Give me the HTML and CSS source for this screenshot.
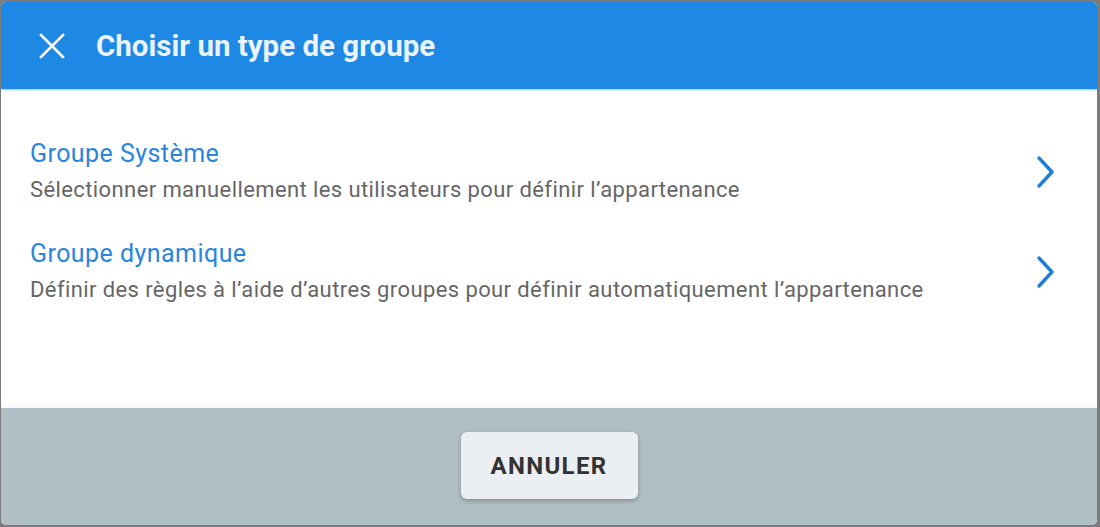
FILE: index.html
```html
<!DOCTYPE html>
<html lang="fr">
<head>
<meta charset="utf-8">
<title>Choisir un type de groupe</title>
<link rel="stylesheet" href="styles.css">
</head>
<body>
<div class="dialog">
  <header class="dialog-header">
    <svg class="close-icon" width="26" height="26" viewBox="0 0 26 26" aria-hidden="true">
      <path d="M2 2 L24 24 M24 2 L2 24" stroke="#fff" stroke-width="2.6" stroke-linecap="square" fill="none"/>
    </svg>
    <h1 class="dialog-title">Choisir un type de groupe</h1>
  </header>
  <main class="dialog-body">
    <div class="option">
      <div class="option-text">
        <div class="option-title">Groupe Système</div>
        <div class="option-desc">Sélectionner manuellement les utilisateurs pour définir l’appartenance</div>
      </div>
      <svg class="chevron" width="22" height="34" viewBox="0 0 22 34" aria-hidden="true">
        <path d="M4 3 L17 17 L4 31" stroke="#1e7fd9" stroke-width="3.4" stroke-linecap="round" stroke-linejoin="round" fill="none"/>
      </svg>
    </div>
    <div class="option">
      <div class="option-text">
        <div class="option-title">Groupe dynamique</div>
        <div class="option-desc">Définir des règles à l’aide d’autres groupes pour définir automatiquement l’appartenance</div>
      </div>
      <svg class="chevron" width="22" height="34" viewBox="0 0 22 34" aria-hidden="true">
        <path d="M4 3 L17 17 L4 31" stroke="#1e7fd9" stroke-width="3.4" stroke-linecap="round" stroke-linejoin="round" fill="none"/>
      </svg>
    </div>
  </main>
  <footer class="dialog-footer">
    <button class="btn-cancel" type="button">ANNULER</button>
  </footer>
</div>
</body>
</html>
```
FILE: styles.css
```css
html, body {
  margin: 0;
  padding: 0;
}
body {
  background: #7b7b7b;
  width: 1100px;
  height: 527px;
  padding: 2px 3px 2px 1px;
  box-sizing: border-box;
  font-family: Roboto, "Liberation Sans", Arial, sans-serif;
}
.dialog {
  height: 100%;
  background: #fff;
  border-radius: 5px;
  overflow: hidden;
  display: flex;
  flex-direction: column;
}
.dialog-header {
  height: 87px;
  flex: none;
  background: #1e88e5;
  display: flex;
  align-items: center;
  padding-left: 38px;
  gap: 31px;
  box-shadow: 0 1px 2px rgba(30, 136, 229, 0.5);
  position: relative;
  z-index: 1;
}
.close-icon {
  display: block;
  flex: none;
}
.dialog-title {
  margin: 0;
  color: #eaf3fc;
  font-size: 29.5px;
  font-weight: 700;
  letter-spacing: 0;
}
.dialog-body {
  flex: 1;
  padding: 48px 40px 0 29px;
  display: flex;
  flex-direction: column;
  gap: 30px;
}
.option {
  display: flex;
  align-items: center;
  justify-content: space-between;
  cursor: pointer;
}
.option-title {
  color: #2a86dc;
  font-size: 25px;
  letter-spacing: 0.45px;
  line-height: 34px;
}
.option-desc {
  margin-top: 2px;
  color: #666;
  font-size: 22px;
  letter-spacing: 0.4px;
  line-height: 34px;
}
.chevron {
  display: block;
  flex: none;
}
.dialog-footer {
  height: 117px;
  flex: none;
  background: #b0bec5;
  display: flex;
  justify-content: center;
  align-items: flex-start;
  padding-top: 24px;
  box-sizing: border-box;
  box-shadow: 0 -3px 6px rgba(0, 0, 0, 0.04);
}
.btn-cancel {
  width: 177px;
  height: 67px;
  border: none;
  border-radius: 6px;
  background: #eceff1;
  color: #333;
  font-family: Roboto, "Liberation Sans", Arial, sans-serif;
  font-size: 24px;
  font-weight: 700;
  letter-spacing: 1.3px;
  box-shadow: 0 2px 4px rgba(0, 0, 0, 0.25);
  cursor: pointer;
}
```
